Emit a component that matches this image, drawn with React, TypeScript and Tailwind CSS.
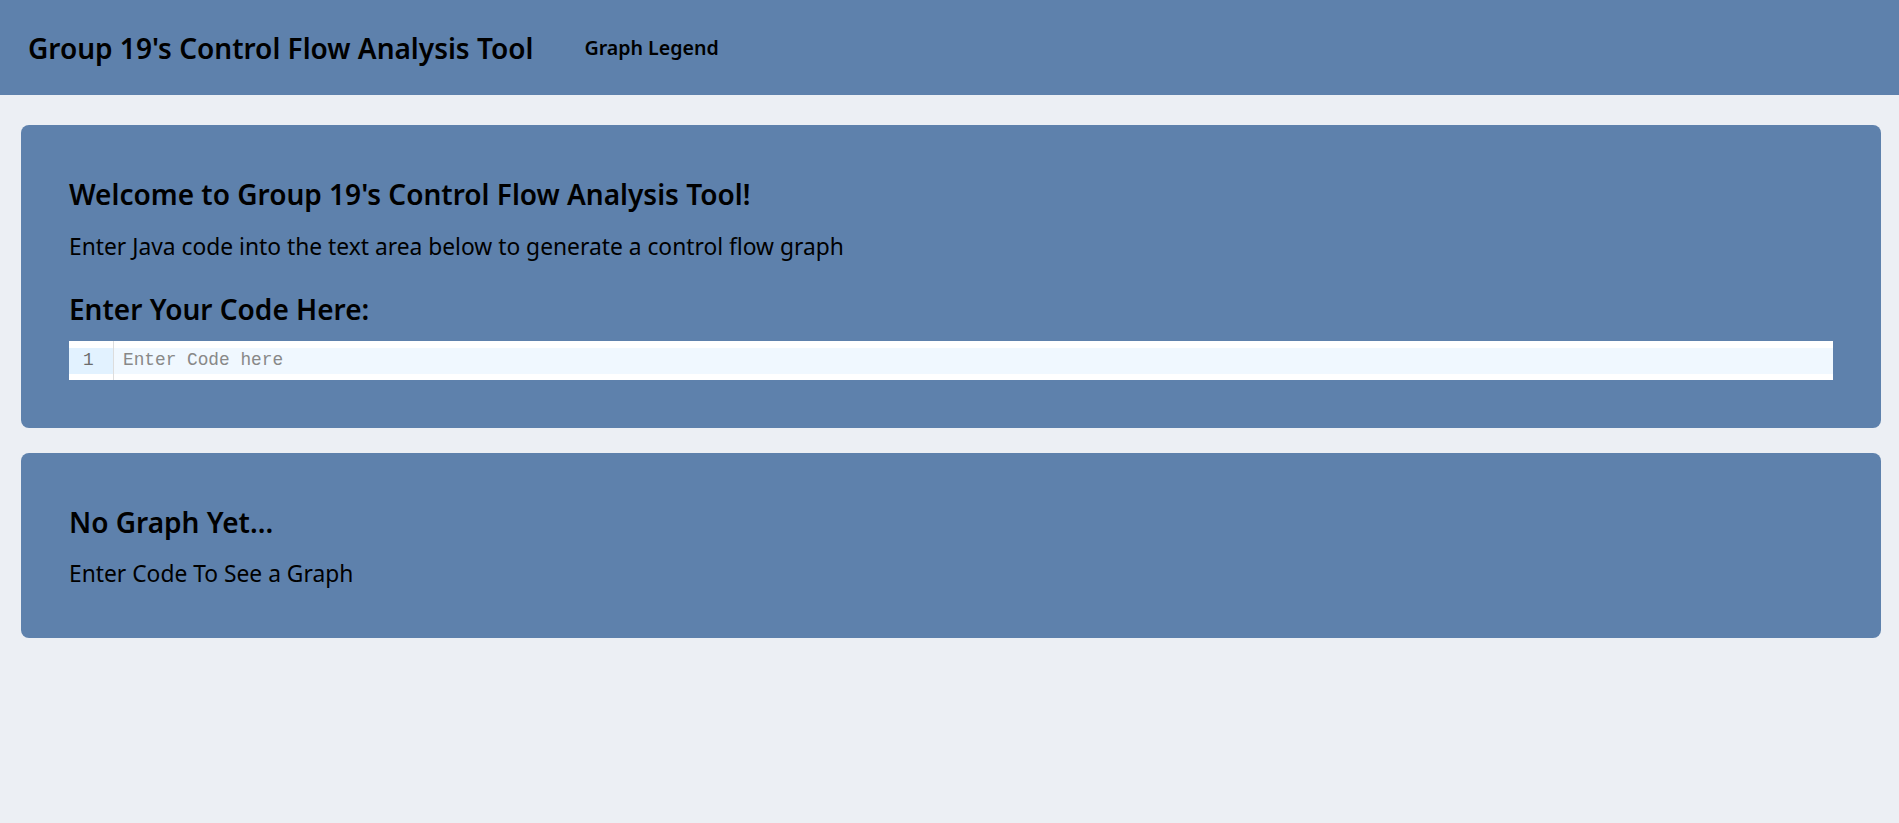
const sans = 'font-["Noto_Sans","Open_Sans",sans-serif]';

function Header() {
  return (
    <header className="flex h-[95px] items-center bg-[#5e81ac] px-[28px] text-black">
      <h1 className="text-[28px] font-semibold leading-[40px]">Group 19's Control Flow Analysis Tool</h1>
      <a className="ml-[51px] text-[19.6px] font-semibold leading-[30px]">Graph Legend</a>
    </header>
  );
}

function CodeEditor() {
  return (
    <div className="flex h-[39px] bg-white font-['Liberation_Mono','DejaVu_Sans_Mono',monospace] text-[17.8px]">
      {/* Gutter */}
      <div className="flex w-[45px] flex-col justify-center border-r border-[#dddddd] bg-white">
        <div className="flex h-[26px] items-center bg-[#e2f2ff] pl-[14px] text-[#6c6c6c]">1</div>
      </div>
      {/* Content */}
      <div className="flex flex-1 flex-col justify-center">
        <div className="flex h-[26px] items-center bg-[#f0f8ff] pl-[9px] text-[#888888]">Enter Code here</div>
      </div>
    </div>
  );
}

function Card({ children }: { children: React.ReactNode }) {
  return <section className="ml-[21px] mr-[18px] rounded-[8px] bg-[#5e81ac] p-[48px] text-black">{children}</section>;
}

export default function App() {
  return (
    <div className={`min-h-[823px] bg-[#eceff4] ${sans}`}>
      <Header />
      <main className="flex flex-col gap-[25px] pt-[30px]">
        <Card>
          <h2 className="text-[28px] font-semibold leading-[42px]">Welcome to Group 19's Control Flow Analysis Tool!</h2>
          <p className="mt-[16px] text-[22.8px] leading-[32px]">
            Enter Java code into the text area below to generate a control flow graph
          </p>
          <h2 className="mt-[25px] text-[28px] font-semibold leading-[42px]">Enter Your Code Here:</h2>
          <div className="mt-[11px]">
            <CodeEditor />
          </div>
        </Card>
        <Card>
          <h2 className="text-[28px] font-semibold leading-[42px]">No Graph Yet...</h2>
          <p className="mt-[15px] text-[22.8px] leading-[32px]">Enter Code To See a Graph</p>
        </Card>
      </main>
    </div>
  );
}
